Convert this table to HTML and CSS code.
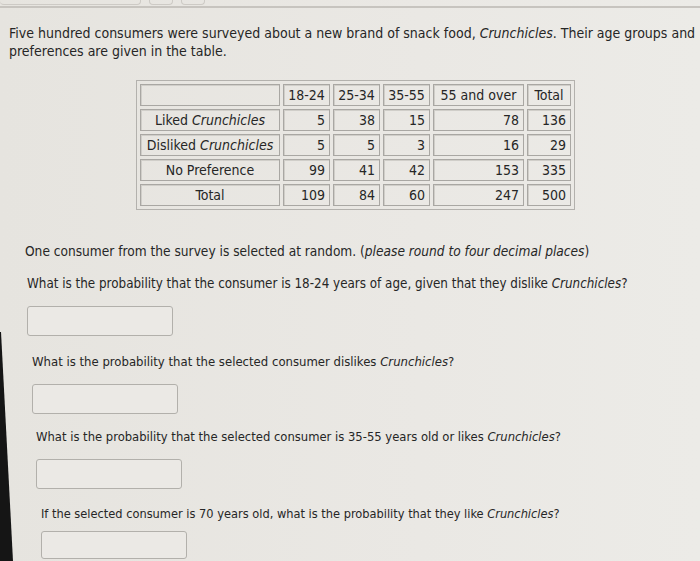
FILE: index.html
```html
<!DOCTYPE html>
<html>
<head>
<meta charset="utf-8">
<link rel="stylesheet" href="styles.css">
</head>
<body>
<div class="topbar">
  <span class="tab tab-wide"></span>
  <span class="tab tab-small"></span>
  <span class="tab tab-small"></span>
</div>
<p class="intro">Five hundred consumers were surveyed about a new brand of snack food, <i>Crunchicles</i>. Their age groups and<br>preferences are given in the table.</p>

<table class="data">
  <tr class="head">
    <td class="label"></td>
    <td class="c1">18-24</td>
    <td class="c2">25-34</td>
    <td class="c3">35-55</td>
    <td class="c4">55 and over</td>
    <td class="c5">Total</td>
  </tr>
  <tr>
    <td class="label">Liked <i>Crunchicles</i></td>
    <td class="num">5</td><td class="num">38</td><td class="num">15</td><td class="num">78</td><td class="num">136</td>
  </tr>
  <tr>
    <td class="label">Disliked <i>Crunchicles</i></td>
    <td class="num">5</td><td class="num">5</td><td class="num">3</td><td class="num">16</td><td class="num">29</td>
  </tr>
  <tr>
    <td class="label">No Preference</td>
    <td class="num">99</td><td class="num">41</td><td class="num">42</td><td class="num">153</td><td class="num">335</td>
  </tr>
  <tr>
    <td class="label">Total</td>
    <td class="num">109</td><td class="num">84</td><td class="num">60</td><td class="num">247</td><td class="num">500</td>
  </tr>
</table>

<div class="questions">
  <p class="lead">One consumer from the survey is selected at random. (<i>please round to four decimal places</i>)</p>
  <div class="q q1">
    <p>What is the probability that the consumer is 18-24 years of age, given that they dislike <i>Crunchicles</i>?</p>
    <div class="answer"></div>
  </div>
  <div class="q q2">
    <p>What is the probability that the selected consumer dislikes <i>Crunchicles</i>?</p>
    <div class="answer"></div>
  </div>
  <div class="q q3">
    <p>What is the probability that the selected consumer is 35-55 years old or likes <i>Crunchicles</i>?</p>
    <div class="answer"></div>
  </div>
  <div class="q q4">
    <p>If the selected consumer is 70 years old, what is the probability that they like <i>Crunchicles</i>?</p>
    <div class="answer"></div>
  </div>
</div>
</body>
</html>
```
FILE: styles.css
```css
html, body {
  margin: 0;
  padding: 0;
}
body {
  width: 700px;
  height: 561px;
  overflow: hidden;
  position: relative;
  background: linear-gradient(90deg, #e6e4df 0%, #eae8e4 60%, #ecebe7 100%);
  font-family: "DejaVu Sans Condensed", Lato, sans-serif;
  color: #262626;
}
body::before {
  content: "";
  position: absolute;
  left: 0;
  top: 0;
  width: 16px;
  height: 561px;
  background: #151515;
  clip-path: polygon(0 332px, 1px 332px, 13px 561px, 0 561px);
}
.topbar {
  height: 6px;
  border-bottom: 2px solid #c7c4bf;
  display: flex;
  gap: 8px;
  align-items: flex-start;
}
.tab {
  display: block;
  height: 4px;
  border: 1px solid #cdcac5;
  border-top: none;
  border-radius: 0 0 4px 4px;
}
.tab-wide { width: 140px; border-left: none; }
.tab-small { width: 22px; }
.intro {
  margin: 16px 0 0 9px;
  font-size: 14px;
  line-height: 18px;
  white-space: nowrap;
}
.data {
  margin: 20px 0 0 136px;
  border: 1px solid #b3b1ad;
  border-spacing: 3px;
  font-size: 14px;
}
.data td {
  border: 1px solid #a9a7a3;
  box-shadow: inset 1px 1px 0 #d0cec9;
  padding: 0 4px;
  height: 20px;
  line-height: 17px;
}
.data tr:not(.head) td {
  height: 20px;
}
.data .label { width: 134px; text-align: center; padding: 0 2px; }
.data .c1, .data .c2, .data .c3 { width: 37px; text-align: center; }
.data .c4 { width: 81px; text-align: center; }
.data .c5 { width: 34px; text-align: center; }
.data .num { text-align: right; }
.questions {
  line-height: 18px;
}
.questions p {
  margin: 0;
  white-space: nowrap;
}
.lead {
  margin: 32px 0 0 25px !important;
  font-size: 13.6px;
}
.q p {
  margin: 0;
}
.q .answer {
  margin-top: 13px;
  width: 144px;
  height: 28px;
  border: 1px solid #b2b0ab;
  border-radius: 3px;
  background: #ebe9e5;
}
.q1 { margin: 15px 0 0 27px; font-size: 13.3px; }
.q2 { margin: 17px 0 0 32px; font-size: 13px; }
.q3 { margin: 14px 0 0 36px; font-size: 12.9px; }
.q4 { margin: 16px 0 0 41px; font-size: 12.7px; }
.q4 .answer { margin-top: 8px; height: 26px; }
```
